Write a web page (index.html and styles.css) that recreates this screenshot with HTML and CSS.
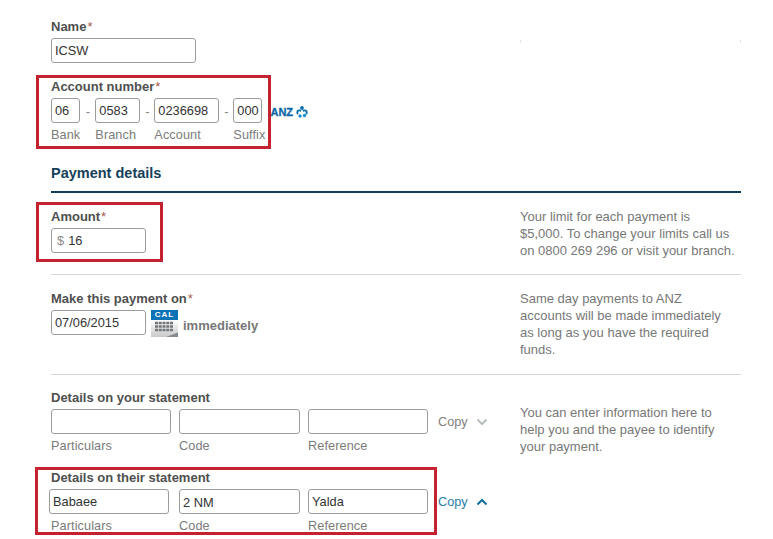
FILE: index.html
```html
<!DOCTYPE html>
<html lang="en">
<head>
<meta charset="utf-8">
<title>Payment details</title>
<link rel="stylesheet" href="styles.css">
</head>
<body>
<main class="page">
  <section class="row row-name">
    <div class="main-col">
      <label class="label">Name<span class="req">*</span></label>
      <input class="field w-name" value="ICSW">
    </div>
    <div class="corner-marks"></div>
  </section>

  <section class="marked mark-account">
    <label class="label">Account number<span class="req">*</span></label>
    <div class="acct-row">
      <div class="part"><input class="field w-bank" value="06"><span class="sub">Bank</span></div>
      <span class="dash dash-wide">-</span>
      <div class="part"><input class="field w-branch" value="0583"><span class="sub">Branch</span></div>
      <span class="dash">-</span>
      <div class="part"><input class="field w-account" value="0236698"><span class="sub">Account</span></div>
      <span class="dash">-</span>
      <div class="part"><input class="field w-suffix" value="000"><span class="sub">Suffix</span></div>
      <div class="bank-logo">
        <span class="anz">ANZ</span>
        <svg class="anz-mark" viewBox="0 0 12 12" aria-hidden="true">
          <circle cx="6" cy="2" r="1.900" fill="#0b6fae"/>
          <path d="M1.500 7.500C.8 5 2.500 3.800 4.300 4.700" fill="none" stroke="#0b6fae" stroke-width="1.900" stroke-linecap="round"/>
          <path d="M10.500 7.500C11.200 5 9.500 3.800 7.700 4.700" fill="none" stroke="#0b6fae" stroke-width="1.900" stroke-linecap="round"/>
          <circle cx="4" cy="10" r="1.700" fill="#1c8fd0"/>
          <circle cx="8.500" cy="9.500" r="1.700" fill="#1c8fd0"/>
        </svg>
      </div>
    </div>
  </section>

  <h2 class="heading">Payment details</h2>

  <section class="row row-amount divided">
    <div class="main-col marked mark-amount">
      <label class="label">Amount<span class="req">*</span></label>
      <div class="field w-amount money"><span class="cur">$</span><span>16</span></div>
    </div>
    <p class="help">Your limit for each payment is $5,000. To change your limits call us on 0800 269 296 or visit your branch.</p>
  </section>

  <section class="row row-date divided">
    <div class="main-col">
      <label class="label">Make this payment on<span class="req">*</span></label>
      <div class="date-row">
        <input class="field w-amount" value="07/06/2015">
        <div class="cal">
          <span class="cal-head">CAL</span>
          <svg class="cal-body" viewBox="0 0 27 17" aria-hidden="true">
            <defs>
              <linearGradient id="calfill" x1="0" y1="0" x2="0" y2="1">
                <stop offset="0" stop-color="#ffffff"/>
                <stop offset="1" stop-color="#c8c8c8"/>
              </linearGradient>
            </defs>
            <rect width="27" height="17" fill="url(#calfill)"/>
            <path d="M4 3h18.500M4 6.500h18.500M4 10h18.500" stroke="#70767a" stroke-width="2.600" stroke-dasharray="3 .75" fill="none"/>
            <path d="M15 17 27 12.500V17Z" fill="#85898c"/>
          </svg>
        </div>
        <span class="when">immediately</span>
      </div>
    </div>
    <p class="help">Same day payments to ANZ accounts will be made immediately as long as you have the required funds.</p>
  </section>

  <section class="row row-state">
    <div class="main-col">
      <label class="label">Details on your statement</label>
      <div class="state-row">
        <div class="part"><input class="field w-a"><span class="sub">Particulars</span></div>
        <div class="part"><input class="field w-b"><span class="sub">Code</span></div>
        <div class="part"><input class="field w-a"><span class="sub">Reference</span></div>
        <div class="copy">Copy
          <svg class="chev" viewBox="0 0 12 8" aria-hidden="true"><path d="M1.500 1.500 6 6l4.500-4.500" fill="none" stroke="#b9bec1" stroke-width="2"/></svg>
        </div>
      </div>
    </div>
    <p class="help help-state">You can enter information here to help you and the payee to identify your payment.</p>
  </section>

  <section class="main-col marked mark-their">
    <label class="label">Details on their statement</label>
    <div class="state-row">
      <div class="part"><input class="field w-a shift" value="Babaee"><span class="sub">Particulars</span></div>
      <div class="part"><input class="field w-b nudge" value="2 NM"><span class="sub">Code</span></div>
      <div class="part"><input class="field w-a" value="Yalda"><span class="sub">Reference</span></div>
      <div class="copy copy-on">Copy
        <svg class="chev" viewBox="0 0 12 8" aria-hidden="true"><path d="M1.500 6.500 6 2l4.500 4.500" fill="none" stroke="#0f6f9c" stroke-width="2"/></svg>
      </div>
    </div>
  </section>
</main>
</body>
</html>
```

FILE: styles.css
```css
*, *::before { box-sizing: border-box; }
html, body { margin: 0; background: #fff; }
body {
  font-family: "Liberation Sans", Arial, sans-serif;
  font-size: 13px;
  color: #4b4b4b;
  overflow: hidden;
}
.page { width: 741px; height: 539px; padding: 18px 0 0 51px; overflow: hidden; }
.row { display: flex; justify-content: space-between; align-items: flex-start; }
.main-col { width: 469px; }
.label {
  display: block;
  height: 16px;
  margin-bottom: 4px;
  line-height: 18px;
  font-size: 13px;
  font-weight: 700;
  color: #4f4f4f;
}
.req { margin-left: 1px; color: #a8594f; font-weight: 400; }
.field {
  display: block;
  height: 25px;
  padding: 0 0 0 3px;
  border: 1px solid #9c9c9c;
  border-radius: 3px;
  background: #fff;
  font: 12.800px "Liberation Sans", Arial, sans-serif;
  color: #333;
  outline: 0;
}
.nudge { padding-top: 2px; }
.w-name { width: 145px; }
.w-bank { width: 29px; }
.w-branch { width: 45px; }
.w-account { width: 65px; }
.w-suffix { width: 29px; }
.w-amount { width: 95px; flex: none; }
.w-a { width: 120px; }
.w-b { width: 121px; }
.row-name { height: 45px; }
.corner-marks {
  width: 221px;
  height: 3px;
  margin-top: 22px;
  border-left: 1px solid #e4e4e4;
  border-right: 1px solid #e4e4e4;
}
.marked { position: relative; }
.marked::before {
  content: "";
  position: absolute;
  border: 3px solid #c3222e;
  pointer-events: none;
}
.mark-account { margin-top: 15px; height: 64px; }
.mark-account::before { left: -15px; top: -3px; width: 235px; height: 74px; }
.acct-row { display: flex; align-items: flex-start; }
.part { display: flex; flex-direction: column; white-space: nowrap; }
.sub { height: 16px; margin-top: 3px; line-height: 18px; font-size: 12.700px; letter-spacing: .1px; color: #7b7b7b; }
.dash { width: 14px; height: 25px; line-height: 27px; text-align: center; color: #888; flex: none; }
.dash-wide { width: 15px; }
.bank-logo { display: flex; align-items: center; gap: 3px; margin: 8px 0 0 5px; height: 12px; }
.anz { font-size: 11px; line-height: 12px; font-weight: 700; color: #0b66a5; -webkit-text-stroke: .3px #0b66a5; }
.anz-mark { width: 12px; height: 12px; display: block; }
.heading {
  margin: 22px 0 0;
  padding-bottom: 9px;
  line-height: 18px;
  font-size: 14.500px;
  font-weight: 700;
  color: #15405a;
  box-sizing: content-box;
  height: 18px;
  border-bottom: 2px solid #123f53;
}
.divided { border-bottom: 1px solid #d6d6d6; }
.row-amount { margin-top: 15px; height: 67px; }
.mark-amount::before { left: -15px; top: -6px; width: 127px; height: 60px; }
.money { display: flex; align-items: center; gap: 4px; }
.cur { color: #8a8a8a; margin-left: 2px; }
.help {
  width: 221px;
  margin: 0;
  padding-right: 4px;
  font-size: 13px;
  line-height: 17px;
  color: #777;
}
.row-date { margin-top: 15px; height: 85px; }
.date-row { display: flex; align-items: flex-start; }
.cal { width: 27px; margin-left: 5px; flex: none; }
.cal-head {
  display: block;
  height: 10px;
  background: #0a72b5;
  color: #fff;
  font-size: 8px;
  font-weight: 700;
  line-height: 10px;
  letter-spacing: 1px;
  text-align: center;
}
.cal-body { display: block; width: 27px; height: 17px; }
.when { margin: 8px 0 0 5px; line-height: 16px; font-weight: 700; color: #777; }
.row-state { margin-top: 14px; height: 80px; }
.state-row { display: flex; gap: 8px; align-items: flex-start; }
.copy { display: flex; align-items: center; height: 25px; margin-left: 2px; font-size: 12.700px; color: #808080; }
.copy-on { color: #2a7ea8; }
.chev { width: 12px; height: 8px; margin-left: 8px; }
.help-state { margin-top: 15px; }
.mark-their::before { left: -16px; top: -2px; width: 402px; height: 68px; }
.shift { margin: 0 2px 0 -2px; }
```
